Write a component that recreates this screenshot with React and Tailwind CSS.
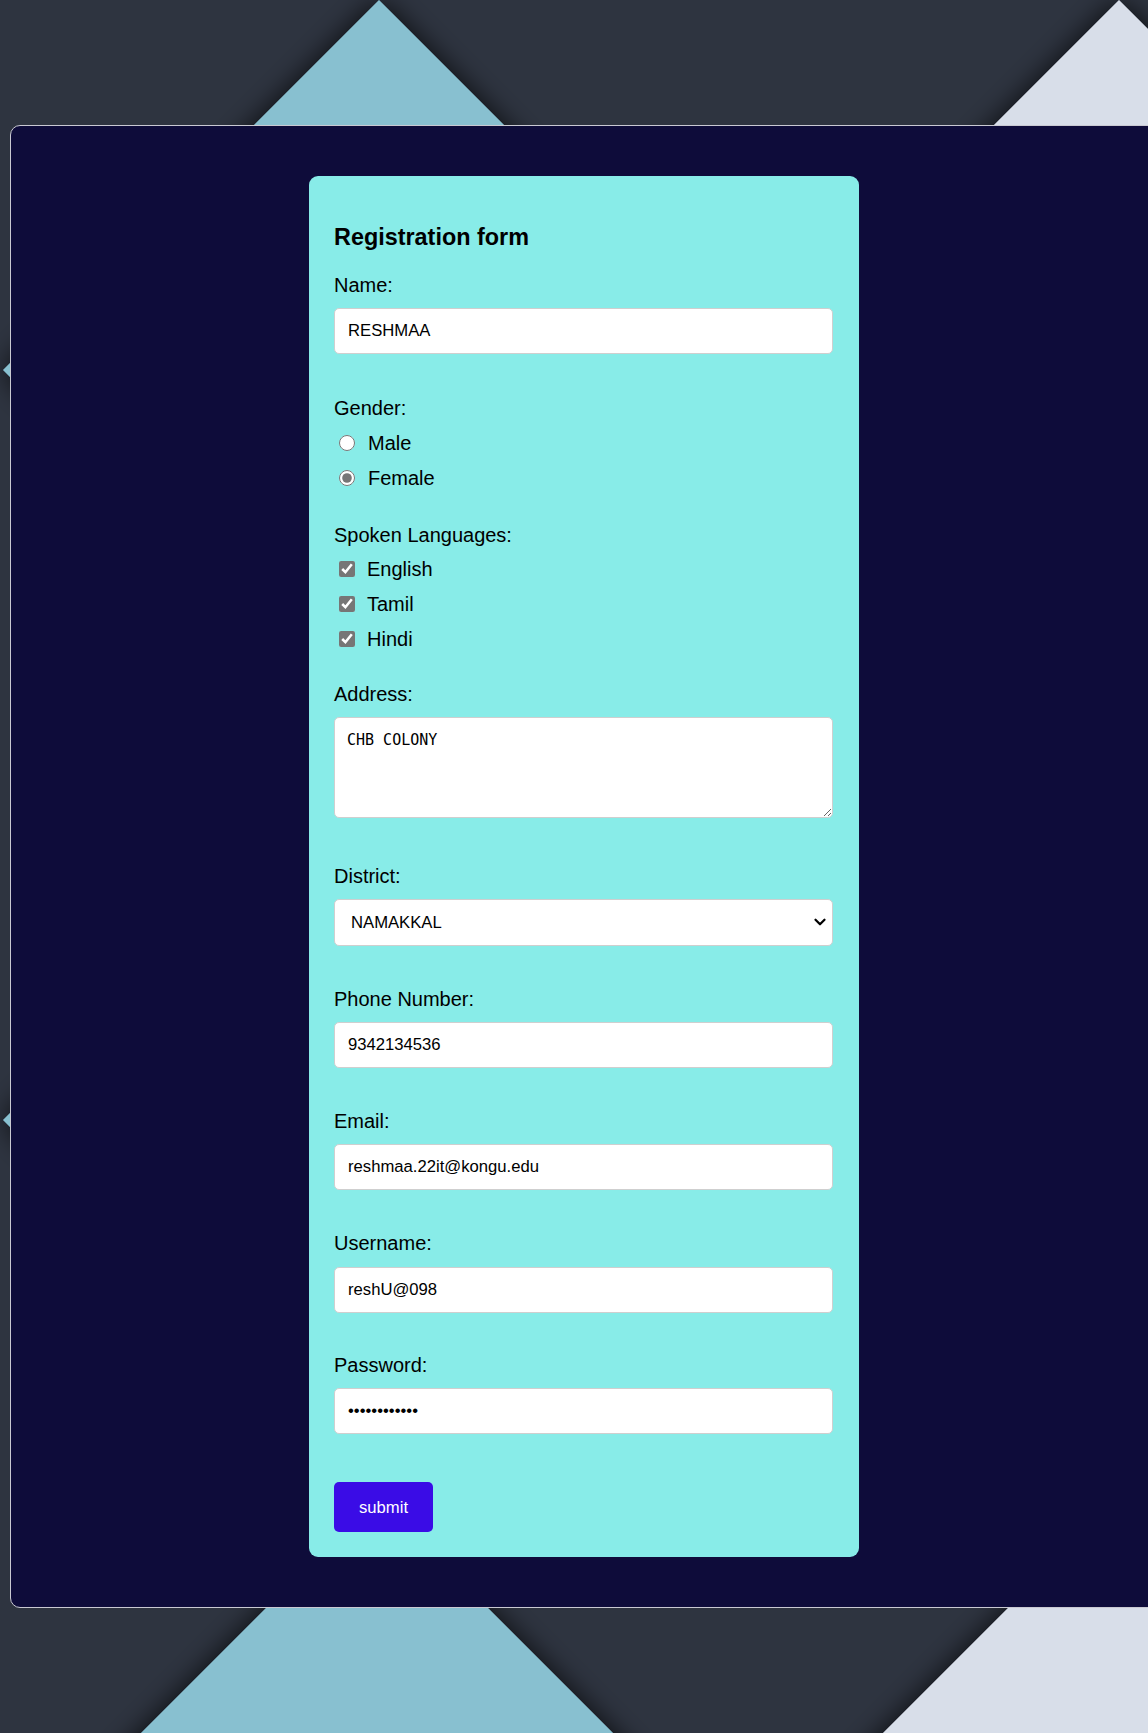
import { ChevronDown } from 'lucide-react';

const sans = { fontFamily: '"Liberation Sans", Arial, sans-serif' };

function Backdrop() {
  return (
    <svg
      className="absolute inset-0"
      width="1148"
      height="1733"
      viewBox="0 0 1148 1733"
    >
      <defs>
        <filter id="shade" x="-50%" y="-50%" width="200%" height="200%">
          <feGaussianBlur in="SourceAlpha" stdDeviation="14" />
          <feComponentTransfer>
            <feFuncA type="linear" slope="0.8" />
          </feComponentTransfer>
          <feMerge>
            <feMergeNode />
            <feMergeNode in="SourceGraphic" />
          </feMerge>
        </filter>
      </defs>
      <g filter="url(#shade)">
        <polygon points="379,0 629,250 129,250" fill="#88c0d0" />
        <polygon points="1119,0 1369,250 869,250" fill="#d8dee9" />
        <polygon points="377,1497 677,1797 77,1797" fill="#88c0d0" />
        <polygon points="1119,1497 1419,1797 819,1797" fill="#d8dee9" />
        <polygon points="3,370 60,313 60,427" fill="#88c0d0" />
        <polygon points="3,1120 60,1063 60,1177" fill="#88c0d0" />
      </g>
    </svg>
  );
}

function Label({ children, className = '' }) {
  return (
    <div className={`text-[20px] leading-[23px] text-black ${className}`}>
      {children}
    </div>
  );
}

function TextInput({ type = 'text', value, className = '' }) {
  return (
    <input
      type={type}
      defaultValue={value}
      className={`block h-[46px] w-[499px] rounded-[5px] border border-[#cfcfcf] bg-white px-[13px] text-[16.67px] text-black outline-none ${className}`}
      style={sans}
    />
  );
}

function Choice({ type, label, checked, className = '' }) {
  return (
    <label className={`flex h-[23px] items-center text-[20px] ${className}`}>
      <input
        type={type}
        name={type === 'radio' ? 'gender' : label}
        defaultChecked={checked}
        className={
          type === 'radio'
            ? 'ml-[5px] h-[16px] w-[16px] accent-[#767676]'
            : 'ml-[5px] h-[16px] w-[16px] accent-[#767676]'
        }
      />
      <span className={type === 'radio' ? 'ml-[13px]' : 'ml-[12px]'}>
        {label}
      </span>
    </label>
  );
}

export default function App() {
  return (
    <div
      className="relative h-[1733px] w-[1148px] overflow-hidden bg-[#2e3440]"
      style={sans}
    >
      <Backdrop />
      <div className="relative ml-[10px] mt-[125px] w-[1148px] rounded-[10px] border border-[#c9c9d2] bg-[#0e0c3a] py-[50px]">
        <form className="mx-auto w-[550px] rounded-[9px] bg-[#88ece8] px-[25px] pb-[25px] pt-[25px]">
          <h3 className="mb-[23px] mt-[23px] text-[23.4px] font-bold leading-[27px] text-black">
            Registration form
          </h3>

          <Label>Name:</Label>
          <TextInput value="RESHMAA" className="mt-[11px]" />

          <Label className="mt-[43px]">Gender:</Label>
          <Choice type="radio" label="Male" className="mt-[11px]" />
          <Choice type="radio" label="Female" checked className="mt-[12px]" />

          <Label className="mt-[35px]">Spoken Languages:</Label>
          <Choice type="checkbox" label="English" checked className="mt-[10px]" />
          <Choice type="checkbox" label="Tamil" checked className="mt-[12px]" />
          <Choice type="checkbox" label="Hindi" checked className="mt-[12px]" />

          <Label className="mt-[33px]">Address:</Label>
          <textarea
            defaultValue="CHB COLONY"
            className="mt-[11px] block h-[101px] w-[499px] rounded-[5px] border border-[#cfcfcf] bg-white px-[12px] pb-[10px] pt-[12px] text-[15px] leading-[20px] text-black outline-none"
            style={{ fontFamily: '"DejaVu Sans Mono", "Liberation Mono", monospace' }}
          />

          <Label className="mt-[47px]">District:</Label>
          <div className="relative mt-[11px] w-[499px]">
            <select
              defaultValue="NAMAKKAL"
              className="block h-[47px] w-[499px] appearance-none rounded-[5px] border border-[#cfcfcf] bg-white pl-[16px] text-[16.67px] text-black outline-none"
              style={sans}
            >
              <option>SALEM</option>
              <option>NAMAKKAL</option>
              <option>ERODE</option>
            </select>
            <ChevronDown
              className="pointer-events-none absolute right-[4px] top-[14px] h-[18px] w-[18px] text-black"
              strokeWidth={3}
            />
          </div>

          <Label className="mt-[42px]">Phone Number:</Label>
          <TextInput value="9342134536" className="mt-[11px]" />

          <Label className="mt-[42px]">Email:</Label>
          <TextInput type="email" value="reshmaa.22it@kongu.edu" className="mt-[11px]" />

          <Label className="mt-[42px]">Username:</Label>
          <TextInput value="reshU@098" className="mt-[12px]" />

          <Label className="mt-[41px]">Password:</Label>
          <TextInput type="password" value="reshmaa12345" className="mt-[11px]" />

          <button
            type="button"
            className="mt-[48px] block h-[50px] w-[99px] rounded-[5px] bg-[#3a0ce6] text-[16.67px] text-white"
            style={sans}
          >
            submit
          </button>
        </form>
      </div>
    </div>
  );
}
